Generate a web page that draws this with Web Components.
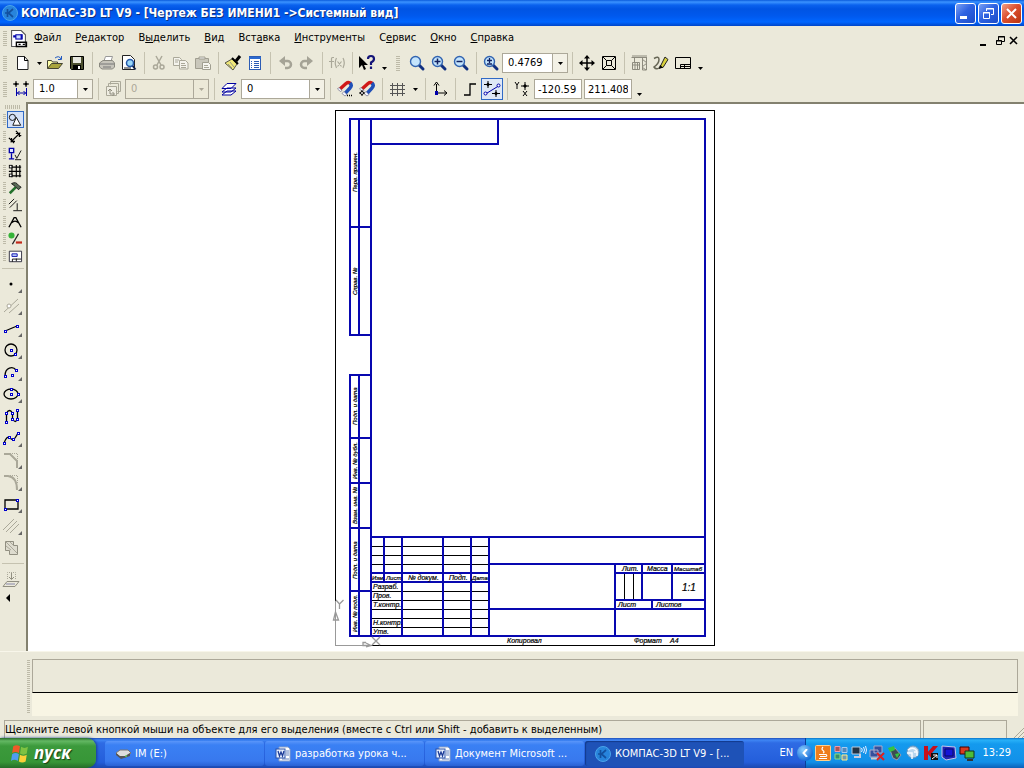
<!DOCTYPE html>
<html lang="ru">
<head>
<meta charset="utf-8">
<title>КОМПАС-3D LT V9</title>
<style>
html,body{margin:0;height:100%}
body{font:11px/14px Tahoma,"DejaVu Sans Condensed","Noto Sans",sans-serif;color:#000;background:#ebe9da}
</style>
</head>
<body>
<kompas-desktop></kompas-desktop>
<script>
const BASE = `*{box-sizing:border-box}button,input,select{font:inherit;color:inherit;margin:0;padding:0;border:0;background:none;border-radius:0;outline:0}`;
function define(name, css, html) {
  customElements.define(name, class extends HTMLElement {
    constructor() {
      super();
      this.attachShadow({mode: 'open'});
    }
    connectedCallback() {
      if (this.shadowRoot.childNodes.length) return;
      const body = typeof html === 'function' ? html(this) : html;
      this.shadowRoot.innerHTML = `<style>${BASE}${css}</style>${body}`;
    }
  });
}

/* ---------- icons, drawn on a 16 x 16 grid ---------- */
const K = 'fill="none" stroke="#000"';
const B = 'fill="none" stroke="#00a"';
const G = 'fill="none" stroke="#aaa899"';
const node = (x, y) => `<rect x="${x - 1}.5" y="${y - 1}.5" width="2" height="2" fill="#fff" stroke="#00c"/>`;
const lens = inner => `<path d="M10 10l4 4" stroke="#113080" stroke-width="3" stroke-linecap="round"/><circle cx="6.500" cy="6.500" r="5" fill="#c4e4fc" stroke="#3264b0" stroke-width="1.400"/>${inner}`;
const magnet = `<path d="M3 8l6-5.500q2.500-2 4.500 0" fill="none" stroke="#d01818" stroke-width="3.400"/><path d="M13 2q2.500 2.500 0 5L8 12.500" fill="none" stroke="#2050b8" stroke-width="3.400"/><path d="M2 6.500l3 3-1.500 1-3-2.500zM7 10.500l3 3-2 1.500-3-2.500z" fill="#f4f6ff" stroke="#557"  stroke-width=".6"/>`;
const word = `<path d="M4 1h9l2 2v12H4z" fill="#fff" stroke="#8aa0c8"/><path d="M11 5h3M11 7h3M11 9h3M7 13h7" stroke="#6080c0"/><rect x="1" y="3" width="9" height="9" fill="#e8f0ff" stroke="#2850a8"/><path d="M3 5l1.500 5L6 6l1.500 4L9 5" fill="none" stroke="#1c3c98" stroke-width="1.300"/>`;
const kompas = `<circle cx="8" cy="8" r="7.500" fill="#2784dc" stroke="#4aa4ea"/><path d="M5.500 4v8M11 4L6.500 8l4.500 4M3 8h3" fill="none" stroke="#12509f" stroke-width="1.700"/>`;
const ICONS = {
  kompas, word,
  doc: `<path d="M1.500.5h9l4 4v11h-13z" fill="#fff" stroke="#555"/><path d="M3 6h3M11 4v5" stroke="#00a" stroke-width="2"/><rect x="5.500" y="4.500" width="5" height="4" fill="#cdf" stroke="#00a"/><path d="M6 15.500v-4h9.500v4zM8 13.500h2M12 13.500h2" ${K} stroke-width="1.300"/>`,
  new: `<path d="M2.500 1.500h7l3.500 4v9H2.500z" fill="#fff" stroke="#222"/><path d="M9.500 1.500v4H13" ${K}/>`,
  open: `<path d="M.5 13.500v-8h4l1 1.500h5v2" fill="#ffffa8" stroke="#443"/><path d="M.5 13.500l4-5h11l-4 5z" fill="#a9a43c" stroke="#443"/><path d="M8 3q4-3 6 1M14.500 1v3.500H11" fill="none" stroke="#2058c0"/>`,
  save: `<path d="M1.500 1.500h13v13h-12l-1-1z" fill="#4c5030" stroke="#000"/><rect x="4" y="2" width="8" height="6" fill="#e8e8e0"/><rect x="4" y="10" width="8" height="4.500" fill="#000"/><rect x="9" y="11" width="2" height="3" fill="#fff"/>`,
  print: `<path d="M5 6l1.500-4.500h7L12 6" fill="#fff" stroke="#999"/><path d="M.5 8L4 5.500h9.500L15.500 8v4l-2 2H3l-2.500-2z" fill="#c7c5bb" stroke="#8a8980"/><path d="M1 9h14M4 12h8" stroke="#777"/>`,
  preview: `<path d="M1.500.5h8l4 4v10h-12z" fill="#fff" stroke="#222"/><path d="M3 13h7" stroke="#222"/><path d="M11 10l3.500 4.500" stroke="#124" stroke-width="2"/><circle cx="9" cy="8" r="3.500" fill="#9bd8f8" stroke="#2458a8" stroke-width="1.500"/>`,
  cut: `<path d="M5 1l5 9M11 1L6 10" ${G} stroke-width="1.500"/><circle cx="4.500" cy="12" r="2" ${G} stroke-width="1.500"/><circle cx="11" cy="12" r="2" ${G} stroke-width="1.500"/>`,
  copy: `<path d="M.5 2.500h6l2 2v6h-8z" fill="#f4f3ec" stroke="#aaa899"/><path d="M6.500 5.500h6l2.500 2.500v6H6.500z" fill="#f4f3ec" stroke="#aaa899"/><path d="M2 5h4M2 7h3M8 8.500h4M8 10.500h5M8 12.500h5" ${G}/>`,
  paste: `<path d="M.5 3.500h13v10H.5z" fill="#c9c7bb" stroke="#a09e90"/><path d="M4 4V2h6v2z" fill="#eee" stroke="#a09e90"/><path d="M7.500 7.500h6l2 2v5h-8z" fill="#f6f5ef" stroke="#a09e90"/><path d="M9 10.500h4M9 12.500h5" ${G}/>`,
  brush: `<path d="M11 6l4-5" stroke="#000" stroke-width="3"/><path d="M0 8l7-4 5 5-4 6z" fill="#f0e878" stroke="#554"/><path d="M7 3l6 6" stroke="#000" stroke-width="2"/><path d="M3 9l4 4M5 7l4 5" stroke="#998"/>`,
  props: `<rect x="2.500" y="1.500" width="11" height="13" fill="#fff" stroke="#2c5cb4"/><path d="M2 3h12" stroke="#2c6ad0" stroke-width="2"/><path d="M4 6.500h1M4 8.500h1M4 10.500h1M4 12.500h1M7 6.500h5M7 8.500h5M7 10.500h5M7 12.500h5" stroke="#2c5cb4"/>`,
  undo: `<path d="M4 6h6.500a3.500 3.500 0 0 1 0 7H8" fill="none" stroke="#a5a396" stroke-width="2.500"/><path d="M8 1v10L2 6z" fill="#a5a396"/>`,
  redo: `<path d="M12 6H5.500a3.500 3.500 0 0 0 0 7H8" fill="none" stroke="#a5a396" stroke-width="2.500"/><path d="M8 1v10l6-5z" fill="#a5a396"/>`,
  fx: `<path d="M5 2.500H3.500Q2.500 2.500 2.500 4v9M0 6.500h5M7.500 3q-2.500 4.500 0 10M14 3q2.500 4.500 0 10M8.500 6.500l4 5M12.500 6.500l-4 5" ${G} stroke-width="1.200"/>`,
  help: `<path d="M0 1v12l3-3 2 5 2-1-2-4h4z" fill="#000"/><path d="M9 4q0-3 3-3t3 3q0 2-3 3.500V10M12 11.500V14" fill="none" stroke="#141478" stroke-width="2.200"/>`,
  zoom: lens(''),
  zoomin: lens('<path d="M3.500 6.500h6M6.500 3.500v6" stroke="#102060" stroke-width="1.500"/>'),
  zoomout: lens('<path d="M3.500 6.500h6" stroke="#102060" stroke-width="1.500"/>'),
  zoompm: lens('<path d="M4 5.500h5M6.500 3v5M4 9h5" stroke="#102060" stroke-width="1.300"/>'),
  pan: `<path d="M8 2v12M2 8h12" stroke="#000" stroke-width="1.500"/><path d="M8 0l3 3.500H5zM8 16l3-3.500H5zM0 8l3.500-3v6zM16 8l-3.500-3v6z"/>`,
  fit: `<path d="M1.500 1.500h13v13h-13zM5.500 5.500h5v5h-5zM2 2l3.500 3.500M14 2l-3.500 3.500M2 14l3.500-3.500M14 14l-3.500-3.500" ${K}/>`,
  crane: `<path d="M.5 2.500h15M11.500 2v13h4V2M3.500 3v4M1.500 7.500h7v7h-7zM1.500 10h7M4 7.500v7M6.500 7.500v7" fill="none" stroke="#8d8b7e"/><path d="M11 4l5 4-5 4 4 3M1 1h15" stroke="#8d8b7e" fill="none"/>`,
  pencil: `<path d="M1 3.500q5-3 5 1T1 12q2 3 5 1t4-4" fill="none" stroke="#676655" stroke-width="1.500"/><path d="M7 12l5-10 3 2.500-5 8z" fill="#d9d13b" stroke="#222"/><path d="M6 14l1-4 3 2.500z"/>`,
  sheet: `<path d="M.5 2.500h15v11H.5zM5.500 13.500v-4h10M5.500 11.500h10M9.500 9.500v4" ${K}/>`,
  step: `<path d="M3 0v6M0 3h6M13 0v6M10 3h6" stroke="#000"/><circle cx="3" cy="3" r="1.500" fill="#000"/><circle cx="13" cy="3" r="1.500" fill="#000"/><path d="M3.500 7v8M13.500 7v8M4 12h9M6.500 10l-2 2 2 2M10.500 10l2 2-2 2" ${B}/>`,
  views: `<path d="M5.500 3.500v-3h10v10h-3M3.500 5.500v-3h10v10h-3" ${G}/><path d="M1.500 5.500h10v9h-10z" fill="#efede2" stroke="#aaa899"/><path d="M3 10l2-2 2 2M5 8v5h4M7.500 11l2 2-2 2" fill="none" stroke="#8c8a7c"/>`,
  layers: `<path d="M1 14l5-4h9l-5 4zM1 11l5-4h9l-5 4zM1 7.500l5-5h9l-5 5z" fill="#fff" stroke="#0000a0"/>`,
  magnetdots: magnet + `<path d="M10 14.500h1M12 14.500h1M14 14.500h1" stroke="#000" stroke-width="1.500"/>`,
  magnet: magnet + `<path d="M3 9v6M0 12h6" stroke="#000"/><circle cx="3" cy="12" r="1.500" fill="#fff" stroke="#000"/>`,
  grid: `<path d="M3.500 2v13M8.500 2v13M13.500 2v13M1 4.500h15M1 8.500h15M1 12.500h15" fill="none" stroke="#555"/>`,
  axes: `<path d="M4.500 3v9h10M2 4.500L4.500 1 7 4.500M12 9.500l3 2.500-3 2.500" ${K}/><path d="M3 10h3v4H3z" fill="#00a"/>`,
  ortho: `<path d="M2 14h6V3h6" ${K} stroke-width="1.300"/>`,
  snap: `<path d="M1.500 13L14.500 5" ${B}/><path d="M4 0v7M0 3.500h8M12 9v7M8 12.500h8" stroke="#000"/><path d="M4 1.500l2 2-2 2-2-2zM12 10.500l2 2-2 2-2-2z"/><circle cx="1.500" cy="12.500" r="1.500" fill="#fff" stroke="#00a"/><circle cx="14.500" cy="4.500" r="1.500" fill="#fff" stroke="#00a"/>`,
  yx: `<path d="M1 1l2 3 2-3M3 4v4M9 10l4 5M13 10l-4 5" ${K}/><path d="M11 1v8M7 5h8" stroke="#000"/><path d="M11 3l2 2-2 2-2-2z"/>`,
  geometry: `<circle cx="5" cy="5" r="3.500" ${K}/><path d="M9.500 5l5 9h-9z" fill="#fff" stroke="#000"/>`,
  dims: `<path d="M3 14L14 3M1 9l6 6M9 1l6 6M4 9v4h4M9 4h4v4" ${K} stroke-width="1.400"/>`,
  marks: `<path d="M1.500 1.500h5v5h-5z" fill="#dde6ff" stroke="#00a" stroke-width="1.500"/><path d="M4 7v6M1 13.500h6" ${B} stroke-width="1.500"/><path d="M8 9l2 4 5-9M8 14.500h7" ${K}/>`,
  edit: `<path d="M3 3.500h12M1 8.500h14M3 13.500h12M4.500 1v14M9.500 1v14M13.500 1v14" ${K} stroke-width="1.300"/><rect x="1.500" y="1.500" width="3" height="3" fill="#fff" stroke="#000"/><rect x="1.500" y="11.500" width="3" height="3" fill="#fff" stroke="#000"/>`,
  hammer: `<path d="M2 14L9 7" stroke="#25722d" stroke-width="3"/><path d="M4 3q5-3 8 2l3 2-3 3-4-4z" fill="#596b57" stroke="#111"/>`,
  param: `<path d="M1 7l6-6M2 11l8-8M10.500 6v8M6 14.500h10" ${K}/>`,
  measure: `<path d="M1 14L7 3h2l6 11M4 9q4-4 8 0" ${K} stroke-width="1.500"/>`,
  select: `<circle cx="4" cy="4" r="3.500" fill="#35b338"/><path d="M5 14l7-12" stroke="#222" stroke-width="1.500"/><path d="M9 12h7" stroke="#c22818" stroke-width="2.500"/>`,
  spec: `<path d="M1.500 2.500h14v12h-14z" fill="#fff" stroke="#223"/><path d="M4.500 5.500h6v3h-6z" fill="#bcd0fa" stroke="#00a"/><path d="M5 14.500v-3h10M9.500 11v3" ${K}/>`,
  point: `<circle cx="8" cy="8" r="1.500" fill="#000"/>`,
  auxline: `<path d="M1 14L15 1M6 15l10-9" ${G}/><circle cx="6" cy="8" r="2" fill="#fff" stroke="#aaa899"/>`,
  segment: `<path d="M2 11l12-5" ${K} stroke-width="1.300"/>${node(2, 11)}${node(14, 6)}`,
  circle: `<circle cx="8" cy="8" r="6" ${K} stroke-width="1.300"/>${node(8, 8)}${node(12, 12)}`,
  arc: `<path d="M2 12C2 3 10 2 13 6" ${K} stroke-width="1.300"/>${node(2, 12)}${node(13, 6)}${node(9, 11)}`,
  ellipse: `<ellipse cx="8" cy="8" rx="7" ry="5" ${K} stroke-width="1.300"/>${node(8, 8)}${node(8, 3)}${node(15, 8)}`,
  contour: `<path d="M3.500 14V5q3-5 6 0v6q3 5 5 0V2" ${K} stroke-width="1.300"/>${node(3, 14)}${node(3, 5)}${node(9, 5)}${node(9, 11)}${node(14, 2)}${node(14, 11)}`,
  spline: `<path d="M1 13q3-8 6-5t5 0 3-5" ${K} stroke-width="1.300"/>${node(1, 13)}${node(6, 7)}${node(10, 9)}${node(15, 3)}`,
  chamfer: `<path d="M1 2h6l7 7v7" fill="none" stroke="#aaa899" stroke-width="2"/><path d="M7 1.500h7.500V9" ${G} stroke-dasharray="1 1"/>`,
  fillet: `<path d="M1 2h4q9 1 9 14" fill="none" stroke="#aaa899" stroke-width="2"/><path d="M7 1.500h7.500V9" ${G} stroke-dasharray="1 1"/>`,
  rect: `<path d="M2 4h13v9H2z" ${K} stroke-width="1.300"/>${node(2, 13)}${node(14, 4)}`,
  hatch: `<path d="M0 12L11 1M3 14L14 3M7 15l9-9" ${G}/>`,
  union: `<path d="M2.500 1.500h8v4h4v9h-8v-4h-4z" fill="#dedccf" stroke="#918f81"/><path d="M3 6l5 4M3 2l11 11M7 2l4 4" ${G}/>`,
  insert: `<path d="M4.500 8V1.500h8V8" ${G} stroke-dasharray="1 1"/><path d="M8.500 2v6M6 6l2.500 2.500L11 6M4 10.500h12l-4 5H0z" fill="none" stroke="#918f81"/><path d="M3 13h9" stroke="#88a"/>`,
  drive: `<path d="M1 7l4-3h8l3 3-5 4H5z" fill="#ddd" stroke="#777"/><path d="M1 7v2l5 4 9-3V7l-5 3H5z" fill="#555"/><path d="M10 10h2" stroke="#6f6"/>`,
  flag: `<path d="M2 2q3-2 6 0L7 8Q4 6 1 8z" fill="#f05a28"/><path d="M9 2.500q3 2 6 0L14 8.500q-3 2-6 0z" fill="#7ec242"/><path d="M1 9q3-2 6 0l-1 6q-3-2-6 0z" fill="#4f9df0"/><path d="M8 9.500q3 2 6 0l-1 6q-3 2-6 0z" fill="#fbd038"/>`,
  java: `<rect x=".5" y=".5" width="15" height="15" rx="1" fill="#ee7d1c" stroke="#ffd08a"/><path d="M8 2q-2 2 0 3.500T8 8M4 9.500h7q2 2-1 2H5M4 13.500h8" fill="none" stroke="#fff" stroke-width="1.200"/>`,
  blocks: `<path d="M2 1.500h5v5H2z" fill="#a55" stroke="#e9a"/><path d="M9 2.500h5v5H9z" fill="#58b" stroke="#ace"/><path d="M2 9h5v5H2z" fill="#3a8c6a" stroke="#8d8"/><path d="M9 10h5v5H9z" fill="#79a" stroke="#fe8"/>`,
  sound: `<path d="M1 2h8v7H1z" fill="#234" stroke="#bcd"/><path d="M3 12h6v-3" fill="none" stroke="#ccd" stroke-width="2"/><path d="M10.500 3q1.500 2 0 4M12.500 2q2 3 0 6M14.500 1q2 4 0 8" fill="none" stroke="#eef"/>`,
  netoff: `<path d="M5 1h8v7H5zM1 5h8v7H1z" fill="#35509c" stroke="#aac"/><path d="M2 13.500h8" stroke="#ccc" stroke-width="2"/><path d="M8 8l7 7M15 8l-7 7" stroke="#d22" stroke-width="2"/>`,
  eject: `<path d="M3 5l5-2 6 7-4 5-4-2z" fill="#3c4c54" stroke="#99a"/><path d="M1 3l6-2 1 4-5 2zM8 9l5-1-3 5z" fill="#35c43e"/>`,
  globe: `<circle cx="8" cy="7" r="6" fill="#b8d6ee" stroke="#7298bc"/><path d="M3 5q5-4 9 1M2 8h5v6M9 7h3v4" fill="none" stroke="#f7fbff" stroke-width="1.500"/>`,
  kasper: `<path d="M1 1h4v14H1z" fill="#c8101c"/><path d="M4 8l6-7h5L9 8l6 7h-5z" fill="#c8101c"/><path d="M8 8h7v7H8z" fill="#111"/><path d="M9 14l5-4M10 10h4v3" fill="none" stroke="#fff"/>`,
  monitor: `<path d="M1 1l13 1 1 11-10 2-4-3z" fill="#2222b4" stroke="#c6c6ea"/><path d="M4 4h8v7H4z" fill="#1414d8" stroke="#0b0b60"/>`,
  screens: `<path d="M1 2h9v7H1z" fill="#d93a22" stroke="#400"/><path d="M6 6h9v7H6z" fill="#4dbd38" stroke="#132"/><path d="M8 15h6" stroke="#333" stroke-width="2"/>`,
  left: `<path d="M8 4v8L4 8z"/>`,
  min: `<path d="M4 11h6v2H4z"/>`,
  restore: `<path d="M6.500 7v-3.500h6v5h-3M6 4h7" ${K}/><path d="M4.500 7.500h5v4h-5zM4 8h6" ${K}/>`,
  close: `<path d="M4 4l7 7M11 4l-7 7" ${K} stroke-width="1.600"/>`
};
define('ui-icon', `:host{display:block;flex:none;width:16px;height:16px}svg{display:block;width:100%;height:100%;overflow:visible}`,
  el => `<svg viewBox="0 0 16 16" aria-hidden="true">${ICONS[el.getAttribute('name')]}</svg>`);

/* ---------- small controls ---------- */
define('tool-button', `
:host{display:block;flex:none;width:22px;height:22px}
button{display:flex;align-items:center;justify-content:center;width:100%;height:100%}
:host([narrow]){width:10px}
:host([pressed]) button{background:#dfe8f6;border:1px solid #316ac5}`,
  el => `<button type="button" aria-label="${el.getAttribute('label')}">${el.hasAttribute('narrow')
    ? '<svg width="5" height="3"><path d="M0 0h5L2.500 3z"/></svg>' : `<ui-icon name="${el.getAttribute('icon')}"></ui-icon>`}</button>`);
define('tool-separator', `:host{display:block;flex:none;width:1px;height:22px;margin:0 3px 0 4px;background:#c5c2b0}`, '');
define('tool-grip', `:host{display:block;flex:none;width:4px;height:15px;background:repeating-linear-gradient(#bdbaa8 0 1px,transparent 1px 2px)}`, '');
define('combo-box', `
:host{display:flex;flex:none;height:20px;border:1px solid #aca899;background:#fff}
:host([disabled]){background:#ece9d8;color:#aca899}
select{appearance:none;flex:1;min-width:0;padding-left:5px;opacity:1;background:transparent}
.arrow{display:flex;align-items:center;justify-content:center;width:15px;background:#f3f1e6;border-left:1px solid #aca899;pointer-events:none}
:host([disabled]) .arrow{background:transparent}`,
  el => `<select aria-label="${el.getAttribute('label')}" ${el.hasAttribute('disabled') ? 'disabled' : ''}><option>${el.getAttribute('value')}</option></select>
<span class="arrow"><svg width="5" height="3"><path fill="currentColor" d="M0 0h5L2.500 3z"/></svg></span>`);
define('coord-field', `:host{display:block;flex:none;width:48px;height:20px;border:1px solid #aca899;background:#fff}input{display:block;width:100%;height:100%;padding:0 3px}`,
  el => `<input type="text" aria-label="${el.getAttribute('label')}" value="${el.getAttribute('value')}">`);

/* ---------- title bar ---------- */
define('title-bar', `
:host{display:flex;align-items:center;flex:none;height:26px;padding:0 2px;gap:2px;color:#fff;
background:linear-gradient(#0a5bdc 0,#3b93ff 2px,#0a62ee 5px,#0054e3 9px,#0059ee 16px,#0066ff 22px,#0045c8 26px)}
h1{flex:1;margin:0;font:bold 12px/16px "DejaVu Sans Condensed",sans-serif;text-shadow:1px 1px #10307c;white-space:nowrap;overflow:hidden;padding-left:1px}
button{display:flex;align-items:center;justify-content:center;width:21px;height:21px;border:1px solid #fff;border-radius:3px;background:linear-gradient(135deg,#7aa0f4,#2f63e2 45%,#1c4cc8)}
.close{background:linear-gradient(135deg,#f0a088,#dc5030 45%,#b83410)}
svg{fill:none;stroke:#fff}`, `
<ui-icon name="kompas"></ui-icon><h1>КОМПАС-3D LT V9 - [Чертеж БЕЗ ИМЕНИ1 -&gt;Системный вид]</h1>
<button type="button" aria-label="Свернуть"><svg width="13" height="13"><path d="M1 10.500h7" stroke-width="3"/></svg></button>
<button type="button" aria-label="Развернуть"><svg width="13" height="13"><path d="M4.500 4V1.500h7v6H9M4 2h8M1.500 5.500h6v6h-6zM1 6h7"/></svg></button>
<button type="button" class="close" aria-label="Закрыть"><svg width="13" height="13"><path d="M2 2l9 9M11 2l-9 9" stroke-width="2"/></svg></button>`);

/* ---------- menu ---------- */
const MENU = ['<u>Ф</u>айл', '<u>Р</u>едактор', 'В<u>ы</u>делить', '<u>В</u>ид', 'Вст<u>а</u>вка', '<u>И</u>нструменты', 'С<u>е</u>рвис', '<u>О</u>кно', '<u>С</u>правка'];
define('menu-bar', `
:host{display:flex;align-items:center;flex:none;height:24px;padding:0 3px}
.doc{width:17px;height:17px;margin:0 7px 0 3px}
nav{display:flex;gap:14px;flex:1}
nav button{white-space:nowrap}
.win{display:flex;align-self:flex-end}
.win button{width:14px;height:18px;display:flex;align-items:center;justify-content:center}
.win button:first-child{width:18px}`, `
<tool-grip></tool-grip><ui-icon class="doc" name="doc"></ui-icon>
<nav>${MENU.map(m => `<button type="button">${m}</button>`).join('')}</nav>
<div class="win"><button type="button" aria-label="Свернуть окно"><ui-icon name="min"></ui-icon></button><button type="button" aria-label="Восстановить окно"><ui-icon name="restore"></ui-icon></button><button type="button" aria-label="Закрыть окно"><ui-icon name="close"></ui-icon></button></div>`);

/* ---------- tool bars ---------- */
const btn = (icon, label, extra = '') => `<tool-button icon="${icon}" label="${label}" ${extra}></tool-button>`;
const drop = label => `<tool-button narrow label="${label}"></tool-button>`;
const SEP = '<tool-separator></tool-separator>';
const ROW = `:host{display:flex;align-items:center;flex:none;height:26px;padding-left:3px}.lead{margin-right:5px}.more{align-self:flex-end;height:16px}`;
define('standard-toolbar', ROW + `.second{margin:0 6px 0 7px}.scale{width:66px}.more{margin-left:1px}`, `
<tool-grip class="lead"></tool-grip>${btn('new', 'Создать')}${drop('Варианты создания')}${btn('open', 'Открыть')}${btn('save', 'Сохранить')}${SEP}
${btn('print', 'Печать')}${btn('preview', 'Просмотр')}${SEP}${btn('cut', 'Вырезать')}${btn('copy', 'Копировать')}${btn('paste', 'Вставить')}${SEP}
${btn('brush', 'Копировать свойства')}${btn('props', 'Свойства')}${SEP}${btn('undo', 'Отменить')}${btn('redo', 'Повторить')}${SEP}
${btn('fx', 'Переменные')}${SEP}${btn('help', 'Справка')}<tool-button class="more" narrow label="Ещё"></tool-button>
<tool-grip class="second"></tool-grip>${btn('zoom', 'Рамка')}${btn('zoomin', 'Увеличить')}${btn('zoomout', 'Уменьшить')}${SEP}
${btn('zoompm', 'Масштаб')}<combo-box class="scale" label="Масштаб" value="0.4769"></combo-box>${SEP}${btn('pan', 'Сдвинуть')}${btn('fit', 'Показать всё')}${SEP}
${btn('crane', 'Библиотеки')}${btn('pencil', 'Перестроить')}${btn('sheet', 'Оформление')}<tool-button class="more" narrow label="Ещё"></tool-button>`);
define('state-toolbar', ROW + `.lead{margin-right:3px}.step{width:60px;margin:0 1px}.view{width:84px;margin:0 1px}.x{margin:0 2px 0 1px}.drop{margin:0 1px 0 2px}.more{margin-left:2px}`, `
<tool-grip class="lead"></tool-grip>${btn('step', 'Шаг курсора')}<combo-box class="step" label="Шаг курсора" value="1.0"></combo-box>${SEP}
${btn('views', 'Состояния видов')}<combo-box class="view" disabled label="Вид" value="0"></combo-box>${SEP}
${btn('layers', 'Состояния слоёв')}<combo-box class="view" label="Слой" value="0"></combo-box>${SEP}
${btn('magnetdots', 'Настройка привязок')}${btn('magnet', 'Привязки')}${SEP}${btn('grid', 'Сетка')}<tool-button class="drop" narrow label="Настройка сетки"></tool-button>${SEP}
${btn('axes', 'Локальная система координат')}${SEP}${btn('ortho', 'Ортогональное черчение')}${btn('snap', 'Округление', 'pressed')}${SEP}
${btn('yx', 'Координаты')}<coord-field class="x" label="X" value="-120.59"></coord-field><coord-field label="Y" value="211.408"></coord-field><tool-button class="more" narrow label="Ещё"></tool-button>`);

/* ---------- compact side panel ---------- */
const PANELS = [['geometry', 'Геометрия'], ['dims', 'Размеры'], ['marks', 'Обозначения'], ['edit', 'Редактирование'], ['hammer', 'Построения'], ['param', 'Параметризация'], ['measure', 'Измерения'], ['select', 'Выделение'], ['spec', 'Спецификация']];
const TOOLS = ['point', 'auxline', 'segment', 'circle', 'arc', 'ellipse', 'contour-', 'spline', 'chamfer', 'fillet', 'rect', 'hatch', 'union-'];
define('side-panel', `
:host{display:flex;flex-direction:column;flex:none;width:26px}
.top{width:16px;height:4px;margin:3px 0 2px 5px;background:repeating-linear-gradient(90deg,#bdbaa8 0 1px,transparent 1px 2px)}
.row{display:flex;align-items:center;gap:1px;padding-left:3px;height:17px}
.row tool-grip{height:12px;width:3px}
.row button{width:17px;height:17px;padding:1px;display:block}
.row ui-icon{width:14px;height:14px}
.row button.on{background:#d5e2f8;border:1px solid #316ac5;padding:0}
hr{flex:none;width:22px;height:1px;border:0;margin:4px 0 4px 2px;background:#c5c2b0}
.tool{display:block;flex:none;position:relative;width:22px;height:22px;margin-left:1px;padding:3px 2px}
.tool svg{position:absolute;right:1px;bottom:2px}
.arrow{margin-left:2px;height:12px}`, `
<div class="top"></div>
${PANELS.map(([i, l], n) => `<div class="row"><tool-grip></tool-grip><button type="button" aria-label="${l}" class="${n ? '' : 'on'}"><ui-icon name="${i}"></ui-icon></button></div>`).join('')}
<hr>
${TOOLS.map(t => `<button type="button" class="tool" aria-label="Инструмент"><ui-icon name="${t.replace('-', '')}"></ui-icon>${t.endsWith('-') ? '' : '<svg width="4" height="4"><path d="M4 0v4H0z" fill="#666"/></svg>'}</button>`).join('')}
<hr><button type="button" class="tool" aria-label="Вставить"><ui-icon name="insert"></ui-icon></button><button type="button" class="arrow" aria-label="Свернуть"><ui-icon name="left"></ui-icon></button>`);

/* ---------- drawing sheet ---------- */
const up = (y, s) => `<text class="small" transform="translate(357 ${y}) rotate(-90)">${s}</text>`;
const tx = (x, y, s, c = '') => `<text class="${c}" x="${x}" y="${y}">${s}</text>`;
define('drawing-sheet', `
:host{display:block;flex:1;min-width:0;min-height:0;background:#fff;border:solid #83816f;border-width:2px 0 0 2px}
svg{display:block;width:100%;height:100%}
.lines path{fill:none;shape-rendering:crispEdges}
.lines .thin{stroke:#000}.lines .main{stroke:#0808b0;stroke-width:2}
.lines .axis{stroke:#999}
text{font:italic 7px "Liberation Sans",sans-serif;fill:#000;stroke:#000;stroke-width:.2px}
.small{font-size:6px}
.ratio{font-size:10px}`, `
<svg viewBox="325 104 402 547" role="img" aria-label="Чертёж формата А4">
<g class="lines">
<path class="thin" d="M335.500 601V110.500H714.500V645.500H371M371 546.500H489M371 555.500H489M371 564.500H489M371 591.500H489M371 600.500H489M371 609.500H489M371 618.500H489M371 627.500H489M624.500 573V600M633.500 573V600"/>
<path class="axis" d="M335.500 601V645.500H371"/>
<path class="main" d="M349 119H706M350 119V336M359 119V335M371 119V636M349 227H371M349 335H371M371 144H499M498 119V144M705 119V637M350 375V636M359 375V636M349 375H371M350 438H371M350 483H371M350 528H371M350 591H371M349 636H705M371 537H705M384 537V582M402 537V636M443 537V636M471 537V636M489 537V636M371 573H489M371 582H489M489 564H705M489 609H705M615 564V636M642 564V600M672 564V600M615 573H705M615 600H705M652 600V609"/>
</g>
<path d="M333.500 620l2-8 3 8zM370 645.500h-7v-3h3M366 643l5 2.500-5 1.500M336 600l3.500 4 4-4M339.500 604v5M372 645l8-8M372 637l8 8" fill="none" stroke="#999" stroke-width="1.300"/>
${up(192, 'Перв. примен.')}${up(295, 'Справ. №')}${up(425, 'Подп. и дата')}${up(479, 'Инв. № дубл.')}${up(524, 'Взам. инв. №')}${up(579, 'Подп. и дата')}${up(632, 'Инв. № подл.')}
${tx(372, 580, 'Изм.', 'small')}${tx(386, 580, 'Лист', 'small')}${tx(408, 580, '№ докум.')}${tx(449, 580, 'Подп.')}${tx(472, 580, 'Дата', 'small')}
${tx(373, 589, 'Разраб.')}${tx(373, 598, 'Пров.')}${tx(373, 607, 'Т.контр.')}${tx(373, 625, 'Н.контр.')}${tx(373, 634, 'Утв.')}
${tx(622, 571, 'Лит.')}${tx(647, 571, 'Масса')}${tx(674, 571, 'Масштаб', 'small')}${tx(618, 607, 'Лист')}${tx(656, 607, 'Листов')}
<text class="ratio" x="682" y="591">1:1</text>
${tx(507, 643, 'Копировал')}${tx(634, 643, 'Формат')}${tx(670, 643, 'А4')}
</svg>`);

/* ---------- property panel and status bar ---------- */
define('property-panel', `
:host{display:flex;flex:none;height:68px;padding:7px 6px 3px 27px;gap:2px;border-top:1px solid #f8f6ea}
tool-grip{height:54px;width:3px;margin-top:1px}
.body{flex:1;display:flex;flex-direction:column}
.page{height:35px;border:1px solid #aca899;border-bottom-color:#000}
.tabs{height:23px;background:#f8f5e4}`, `<tool-grip></tool-grip><div class="body"><div class="page"></div><div class="tabs"></div></div>`);
define('status-bar', `
:host{display:flex;flex:none;height:18px;margin-top:1px;padding-left:4px;gap:2px}
.text{flex:1;border:1px solid #aca899;border-bottom:0;white-space:nowrap;overflow:hidden;line-height:18px}
.cell{width:84px;border:1px solid #aca899;border-bottom:0}
.size{width:15px}`, `<div class="text" role="status">Щелкните левой кнопкой мыши на объекте для его выделения (вместе с Ctrl или Shift - добавить к выделенным)</div><div class="cell"></div><svg class="size" viewBox="0 0 15 18"><path d="M5 18l10-10M9 18l6-6M13 18l2-2" stroke="#aca899" fill="none"/></svg>`);

/* ---------- task bar ---------- */
define('task-button', `
:host{display:block;flex:0 1 159px;min-width:0}
button{display:flex;align-items:center;gap:4px;width:100%;height:25px;padding:0 10px;border-radius:3px;color:#fff;text-align:left;background:linear-gradient(#5a96fa,#3a80f4 4px,#3878ee 20px,#2a62d4)}
:host([active]) button{background:#1e52b7;box-shadow:inset 1px 1px 1px #123a8c}
span{flex:1;white-space:nowrap;overflow:hidden}`,
  el => `<button type="button"><ui-icon name="${el.getAttribute('icon')}"></ui-icon><span><slot></slot></span></button>`);
const TRAY = ['java', 'blocks', 'sound', 'netoff', 'eject', 'globe', 'kasper', 'monitor', 'screens'];
define('task-bar', `
:host{display:flex;align-items:stretch;flex:none;height:30px;color:#fff;background:linear-gradient(#1f4fb8,#3f86f4 2px,#2e6be4 5px,#245edb 24px,#1c48ae)}
.start{display:flex;align-items:center;gap:5px;width:96px;padding-left:11px;border-radius:0 9px 9px 0;background:linear-gradient(#2a6c2a,#63b863 3px,#3c9a3c 8px,#379637 24px,#256c28);box-shadow:1px 0 3px #163c90;font:italic bold 17px/20px "Open Sans","Noto Sans",sans-serif;text-shadow:1px 1px 1px #164016}
.start ui-icon{width:18px;height:18px}
.tasks{display:flex;flex:1;gap:1px;padding:3px 0 0 9px;min-width:0}
.lang{align-self:center;width:26px}
.tray{display:flex;align-items:center;gap:2px;padding-right:13px;background:linear-gradient(#0c72c8,#28b0f8 2px,#149aee 6px,#1290e8 24px,#0b60b8);border-left:1px solid #0b3f98}
.expand{display:flex;align-items:center;justify-content:center;width:16px;height:16px;border-radius:8px;margin-left:-9px;background:radial-gradient(circle at 6px 5px,#8cd0ff,#1b6fd8 70%)}
time{margin-left:5px}`, `
<button type="button" class="start"><ui-icon name="flag"></ui-icon>пуск</button>
<div class="tasks"><task-button icon="drive">IM (E:)</task-button><task-button icon="word">разработка урока ч...</task-button><task-button icon="word">Документ Microsoft ...</task-button><task-button icon="kompas" active>КОМПАС-3D LT V9 - [...</task-button></div>
<span class="lang">EN</span>
<div class="tray"><button type="button" class="expand" aria-label="Показать скрытые значки"><svg width="7" height="8"><path d="M5 0L1.500 4 5 8" fill="none" stroke="#fff" stroke-width="2"/></svg></button>${TRAY.map(t => `<ui-icon name="${t}"></ui-icon>`).join('')}<time>13:29</time></div>`);

define('kompas-desktop', `
:host{display:flex;flex-direction:column;height:100%;min-height:700px;overflow:hidden}
main{display:flex;flex:1;min-height:0}`, `
<title-bar></title-bar><menu-bar></menu-bar><standard-toolbar></standard-toolbar><state-toolbar></state-toolbar>
<main><side-panel></side-panel><drawing-sheet></drawing-sheet></main>
<property-panel></property-panel><status-bar></status-bar><task-bar></task-bar>`);
</script>
</body>
</html>
